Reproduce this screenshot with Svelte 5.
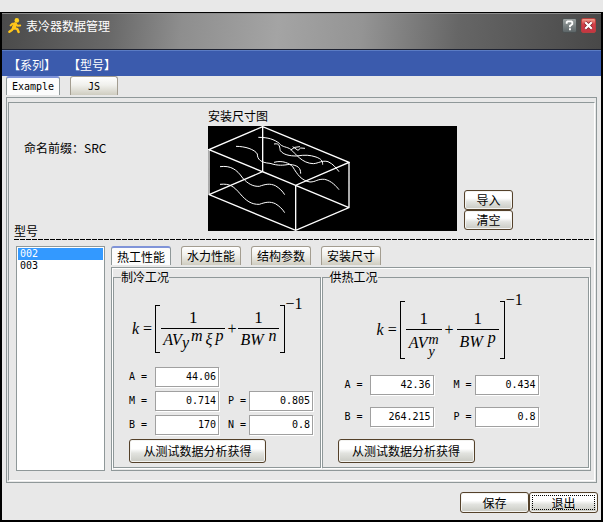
<script lang="ts">
	/**
	 * Surface cooler data manager: model list, install drawing and the
	 * heat-transfer coefficients for cooling and heating conditions.
	 */
	interface Field {
		label: string;
		value: string;
	}

	const menus = ['【系列】', '【型号】'];
	const pages = ['Example', 'JS'];
	const sections = ['热工性能', '水力性能', '结构参数', '安装尺寸'];
	const models = ['002', '003'];

	let page = $state('Example');
	let section = $state('热工性能');
	let model = $state('002');

	// null leaves the second half of a row empty
	let cooling = $state<(Field | null)[]>([
		{ label: 'A', value: '44.06' },
		null,
		{ label: 'M', value: '0.714' },
		{ label: 'P', value: '0.805' },
		{ label: 'B', value: '170' },
		{ label: 'N', value: '0.8' }
	]);
	let heating = $state<(Field | null)[]>([
		{ label: 'A', value: '42.36' },
		{ label: 'M', value: '0.434' },
		{ label: 'B', value: '264.215' },
		{ label: 'P', value: '0.8' }
	]);
</script>

{#snippet fields(list: (Field | null)[], prefix: string)}
	{#each list as f, i (i)}
		{#if f}
			<label for="{prefix}-{f.label}">{f.label} =</label>
			<input id="{prefix}-{f.label}" type="text" bind:value={f.value} />
		{:else}
			<span></span><span></span>
		{/if}
	{/each}
{/snippet}

<div class="screen">
	<div class="window">
		<header class="titlebar">
			<svg class="logo" viewBox="0 0 14 16" aria-hidden="true">
				<circle cx="8.8" cy="2.4" r="2.3" fill="#ffd21f" />
				<g fill="none" stroke="#ffc61a" stroke-linecap="round" stroke-linejoin="round">
					<path d="M7.2 6.2 5.8 9.8" stroke-width="3.8" />
					<path d="M2.6 7.4 4.4 5.8 7.4 5.8 9.6 7.8 12.2 7.4" stroke-width="2" />
					<path d="M5.2 9.8 4 12 1.4 13.8M6 9.8 9.4 11.2 10.6 14" stroke-width="2.4" />
				</g>
			</svg>
			<h1>表冷器数据管理</h1>
			<button type="button" class="sys help" aria-label="帮助">
				<svg viewBox="0 0 14 14" aria-hidden="true">
					<path
						d="M4 5V3.5L5 2.5H9L10 3.5V5.5L7.5 7.5V9M7.5 10V12"
						fill="none"
						stroke="#fff"
						stroke-width="2"
					/>
				</svg>
			</button>
			<button type="button" class="sys close" aria-label="关闭">
				<svg viewBox="0 0 14 14" aria-hidden="true">
					<path d="M3.5 3.5 10.5 10.5M10.5 3.5 3.5 10.5" stroke="#7c1f25" stroke-width="4" />
					<path d="M3.5 3.5 10.5 10.5M10.5 3.5 3.5 10.5" stroke="#fff" stroke-width="2.4" />
				</svg>
			</button>
		</header>

		<nav class="menubar">
			{#each menus as m (m)}
				<button type="button">{m}</button>
			{/each}
		</nav>

		<main>
			<div class="tabs pages" role="tablist">
				{#each pages as p (p)}
					<button type="button" role="tab" aria-selected={page === p} onclick={() => (page = p)}
						>{p}</button
					>
				{/each}
			</div>

			<div class="sheet">
				<div class="group">
					<section class="top">
						<div class="side">
							<p class="prefix">命名前缀：SRC</p>
							<label for="models">型号</label>
						</div>
						<figure>
							<figcaption>安装尺寸图</figcaption>
							<div class="canvas">
								<svg viewBox="24 78 426 315" aria-hidden="true">
									<g fill="none" stroke="#fff">
										<path
											stroke-width="4"
											d="M188 80 27 149 287 256 447 187ZM27 149V284L287 391 447 323V187M287 256V391M188 80V215L27 284M188 215 447 323"
										/>
										<g stroke-width="3">
											<path
												d="M175 112C205 112 222 118 238 130C246 142 262 140 272 148C288 162 306 190 340 191C356 190 366 180 384 185C400 192 408 204 417 215"
											/>
											<path
												d="M222 132C242 128 238 144 241 152C250 164 268 168 290 168C315 164 330 165 348 171C364 177 368 182 368 194"
											/>
											<path
												d="M108 139C135 139 164 148 172 162C172 178 182 188 210 190C235 198 250 196 268 193C295 196 302 204 302 221"
											/>
											<path
												d="M222 187C248 180 268 190 278 200C292 224 305 242 330 246C348 246 352 236 374 238C395 243 408 258 417 269"
											/>
											<path
												d="M60 200C92 196 110 208 128 234C144 252 160 260 178 259C198 252 210 250 226 257C238 264 248 274 254 284"
											/>
											<path
												d="M60 253C90 250 102 260 120 281C138 302 154 314 178 313C198 306 210 304 226 311C238 318 248 328 254 338"
											/>
											<path d="M272 150 284 142 300 140M278 140 294 151 302 144 315 145" />
										</g>
									</g>
								</svg>
							</div>
						</figure>
						<div class="stack">
							<button type="button" class="btn">导入</button>
							<button type="button" class="btn">清空</button>
						</div>
					</section>

					<div class="dash"></div>

					<section class="bottom">
						<select id="models" size="4" bind:value={model}>
							{#each models as m (m)}
								<option value={m}>{m}</option>
							{/each}
						</select>

						<div class="detail">
							<div class="tabs sections" role="tablist">
								{#each sections as s (s)}
									<button
										type="button"
										role="tab"
										aria-selected={section === s}
										onclick={() => (section = s)}>{s}</button
									>
								{/each}
							</div>

							<div class="conditions">
								<fieldset class="cooling">
									<legend>制冷工况</legend>
									<div class="formula">
										<i>k</i><span class="op">=</span>
										<span class="bracket open"></span>
										<span class="frac">
											<span class="num">1</span>
											<span class="den"
												><i>AV</i><i class="sub">y</i><i class="sup">m</i><i class="xi">ξ</i><i
													class="sup">p</i
												></span
											>
										</span>
										<span class="op">+</span>
										<span class="frac">
											<span class="num">1</span>
											<span class="den"><i>BW</i><i class="sup gap">n</i></span>
										</span>
										<span class="bracket shut"></span>
										<span class="power">−1</span>
									</div>
									<div class="fields">{@render fields(cooling, 'cooling')}</div>
									<button type="button" class="btn fit">从测试数据分析获得</button>
								</fieldset>

								<fieldset class="heating">
									<legend>供热工况</legend>
									<div class="formula">
										<i>k</i><span class="op">=</span>
										<span class="bracket open"></span>
										<span class="frac">
											<span class="num">1</span>
											<span class="den"
												><i>AV</i><span class="pair"><i>m</i><i>y</i></span></span
											>
										</span>
										<span class="op">+</span>
										<span class="frac">
											<span class="num">1</span>
											<span class="den"><i>BW</i><i class="sup gap">p</i></span>
										</span>
										<span class="bracket shut"></span>
										<span class="power">−1</span>
									</div>
									<div class="fields">{@render fields(heating, 'heating')}</div>
									<button type="button" class="btn fit">从测试数据分析获得</button>
								</fieldset>
							</div>
						</div>
					</section>
				</div>
			</div>

			<footer>
				<button type="button" class="btn">保存</button>
				<button type="button" class="btn default"><span>退出</span></button>
			</footer>
		</main>
	</div>
</div>

<style>
	:global(body) {
		margin: 0;
		background: #e8e8e8;
	}

	.screen {
		--line: #8f9899;
		--cjk: 'Noto Sans CJK SC', sans-serif;
		--mono: 'DejaVu Sans Mono', 'Noto Sans CJK SC', monospace;
		display: flex;
		flex-direction: column;
		box-sizing: border-box;
		min-height: 100vh;
		padding-top: 12px;
		font: 12px/16px var(--cjk);
		color: #000;
	}

	button,
	input,
	select {
		margin: 0;
		font: inherit;
		color: inherit;
	}

	button {
		padding: 0;
	}

	.window {
		flex: 1;
		display: flex;
		flex-direction: column;
		border: 2px solid #000;
		border-top-width: 1px;
	}

	.titlebar {
		display: flex;
		align-items: flex-start;
		gap: 4px;
		box-sizing: border-box;
		height: 37px;
		padding: 4px 5px 0 6px;
		border-top: 1px solid #8c8c8c;
		border-bottom: 1px solid #1e2230;
		background: linear-gradient(
			95deg,
			#4a4a4a,
			#686868 18%,
			#8e8e8e 30%,
			#a4a4a4 46%,
			#949494 60%,
			#666 76%,
			#484848
		);
	}

	.logo {
		width: 14px;
		height: 16px;
	}

	h1 {
		flex: 1;
		margin: 0;
		font-size: 12px;
		font-weight: 400;
		color: #fff;
	}

	.sys {
		width: 15px;
		height: 15px;
		border: 1px solid #4c5152;
		border-radius: 2px;
	}

	.sys svg {
		display: block;
		width: 13px;
		height: 13px;
	}

	.help {
		background: linear-gradient(#9aa0a0, #5d6668);
	}

	.close {
		border-color: #b6403f;
		background: linear-gradient(#f0a08c, #d43f48 40%, #c33442);
	}

	.menubar {
		display: flex;
		gap: 12px;
		padding: 6px 6px 3px;
		border-top: 1px solid #5b7cc4;
		background: #3b5bad;
	}

	.menubar button {
		border: 0;
		background: none;
		color: #fff;
	}

	main {
		flex: 1;
		display: flex;
		flex-direction: column;
		padding: 0 4px 7px;
		background: #e8e8e8;
	}

	.tabs {
		display: flex;
		gap: 10px;
		margin-bottom: 2px;
	}

	.tabs button {
		box-sizing: border-box;
		width: 60px;
		height: 19px;
		border: 1px solid #a39d90;
		border-bottom: 0;
		border-radius: 3px 3px 0 0;
		background: linear-gradient(#fff, #f0f0ec 45%, #cfcdc0);
		line-height: 18px;
		white-space: nowrap;
	}

	.tabs button[aria-selected='true'] {
		border-color: var(--line);
		border-top: 2px solid #7f93d8;
		background: #fcfcfc;
		line-height: 17px;
	}

	.pages button {
		width: 48px;
		font: 10px/20px var(--mono);
	}

	.pages button:first-child {
		width: 54px;
	}

	.sheet {
		flex: 1;
		display: flex;
		flex-direction: column;
		padding: 4px 1px 1px;
		border: 1px solid var(--line);
	}

	.group {
		flex: 1;
		display: flex;
		flex-direction: column;
		padding: 5px 0 9px 5px;
		border: 1px solid;
		border-color: var(--line) #fff #fff var(--line);
	}

	.top {
		display: flex;
	}

	.side {
		flex: none;
		display: flex;
		flex-direction: column;
		justify-content: space-between;
		width: 194px;
	}

	.prefix {
		margin: 32px 0 0 10px;
	}

	figure {
		margin: 0 7px 8px 0;
	}

	figcaption {
		margin-bottom: 2px;
	}

	.canvas {
		width: 249px;
		background: #000;
	}

	.canvas svg {
		display: block;
		width: 142px;
		height: 105px;
	}

	.stack {
		display: flex;
		flex-direction: column;
		justify-content: flex-end;
		margin-bottom: 9px;
	}

	.stack .btn {
		width: 49px;
		height: 20px;
	}

	.btn {
		box-sizing: border-box;
		border: 1px solid #54412a;
		border-radius: 3px;
		background: linear-gradient(#fff 40%, #e2e3df 60%, #c9cac3);
		box-shadow: inset 0 0 0 1px #f4f4f2;
	}

	.dash {
		height: 1px;
		background: repeating-linear-gradient(to right, #000 0 5px, transparent 5px 6px);
	}

	.bottom {
		flex: 1;
		display: flex;
		gap: 6px;
		padding: 6px 3px 0 2px;
	}

	select {
		flex: none;
		box-sizing: border-box;
		width: 89px;
		height: auto;
		padding: 1px;
		border: 1px solid var(--line);
		border-radius: 0;
		outline: 0;
		background: #fff;
		font: 10px/12px var(--mono);
		overflow: hidden;
	}

	option {
		min-height: 12px;
		padding: 0 2px;
	}

	option:checked {
		background: linear-gradient(#39f, #39f);
		-webkit-text-fill-color: #fff;
	}

	.detail {
		flex: 1;
		display: flex;
		flex-direction: column;
	}

	.conditions {
		flex: 1;
		display: grid;
		grid-template-columns: 208fr 268fr;
		gap: 1px;
		padding: 1px 1px 2px;
		border: 1px solid var(--line);
		box-shadow: inset 1px 1px #fff;
	}

	fieldset {
		min-width: 0;
		margin: 0;
		padding: 0 7px 3px;
		border: 1px solid var(--line);
		box-shadow: 1px 1px #fff;
	}

	legend {
		padding: 0;
	}

	.formula {
		display: flex;
		align-items: center;
		font: 16px/16px 'Liberation Serif', serif;
	}

	.cooling .formula {
		--half: 24px;
		padding: 20px 0 14px 11px;
	}

	.heating .formula {
		--half: 29px;
		padding: 16px 0 16px 47px;
	}

	.op {
		margin: 0 3px 0 4px;
	}

	.frac + .op {
		margin: 0 1px;
	}

	.heating .frac + .op {
		margin: 0 2px;
	}

	.bracket {
		align-self: stretch;
		width: 4px;
		border: 1px solid #000;
	}

	.open {
		border-right: 0;
	}

	.shut {
		border-left: 0;
	}

	.frac {
		display: flex;
		flex-direction: column;
		text-align: center;
		white-space: nowrap;
	}

	.num,
	.den {
		box-sizing: border-box;
		height: var(--half);
		margin: 0 1px;
	}

	.num {
		display: flex;
		align-items: flex-end;
		justify-content: center;
		padding-bottom: 2px;
		border-bottom: 1px solid #000;
		font-size: 17px;
	}

	.den {
		padding: 3px 2px 0;
	}

	.heating .den {
		padding: 4px 3px 0;
	}

	.sub,
	.sup {
		line-height: 0;
	}

	.sub {
		margin-right: 2px;
		vertical-align: -3px;
	}

	.sup {
		vertical-align: 4px;
	}

	.gap {
		margin-left: 5px;
	}

	.xi {
		margin: 0 3px;
	}

	.pair {
		display: inline-flex;
		flex-direction: column;
		margin-left: 1px;
		font-size: 14px;
		line-height: 12px;
		vertical-align: 4px;
		text-align: left;
	}

	.power {
		align-self: flex-start;
		margin: -9px 0 0 1px;
	}

	.fields {
		display: grid;
		width: max-content;
		align-items: center;
		font: 10px/12px var(--mono);
	}

	.cooling .fields {
		grid-template-columns: 26px 64px 30px 64px;
		row-gap: 4px;
		margin: 0 0 4px 8px;
	}

	.heating .fields {
		grid-template-columns: 25px 64px 41px 64px;
		row-gap: 12px;
		margin: 0 0 12px 15px;
	}

	.fields input + label {
		justify-self: end;
		margin-right: 3px;
	}

	.fields label:nth-child(4n + 1) {
		justify-self: start;
		margin-right: 0;
	}

	.fields input {
		box-sizing: border-box;
		width: 64px;
		height: 20px;
		padding: 0 2px 2px;
		border: 1px solid #a0a0a0;
		border-radius: 0;
		box-shadow: 1px 1px #fff;
		background: #fff;
		text-align: right;
	}

	.fit {
		display: block;
		width: 137px;
		height: 24px;
		margin-left: 8px;
	}

	footer {
		display: flex;
		justify-content: flex-end;
		margin: 9px -1px 0 0;
	}

	footer .btn {
		width: 69px;
		height: 21px;
	}

	.default {
		padding: 2px;
	}

	.default span {
		display: block;
		border: 1px dotted #000;
		line-height: 13px;
	}
</style>
